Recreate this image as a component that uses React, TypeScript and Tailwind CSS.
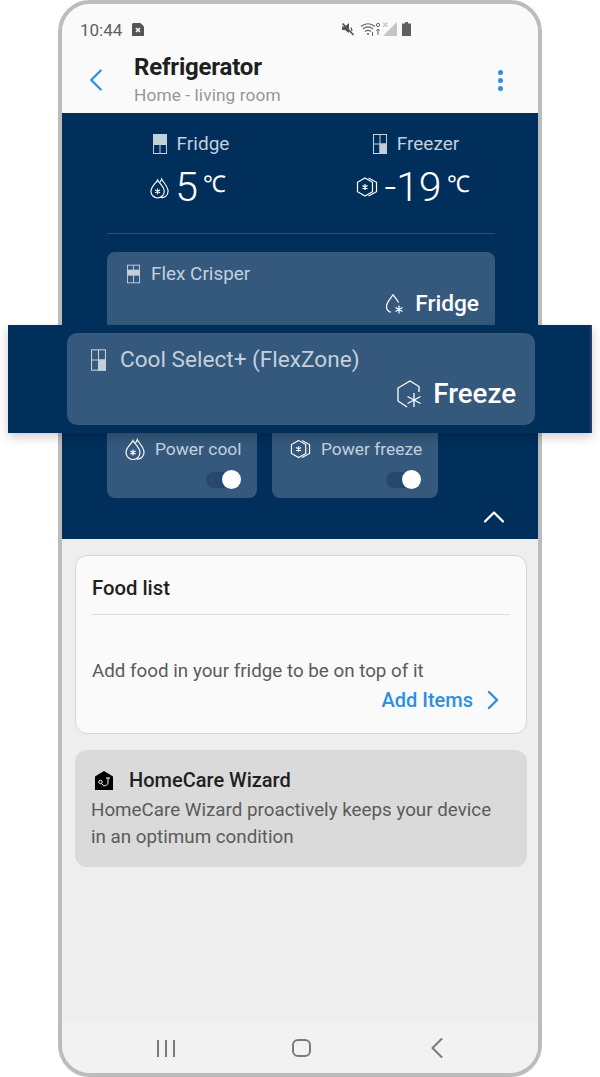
import { ChevronLeft, ChevronRight, ChevronUp } from 'lucide-react';

type DoorProps = { shade: 'top' | 'bottomRight' | 'middle'; className: string };

function DoorIcon({ shade, className }: DoorProps) {
  return (
    <svg viewBox="0 0 14 20" className={className} fill="none" stroke="#c3d0dc" strokeWidth="1">
      {shade === 'top' && <rect x="0.5" y="0.5" width="13" height="10" fill="#c3d0dc" />}
      {shade === 'bottomRight' && <rect x="7" y="10" width="6.5" height="9.5" fill="#c3d0dc" />}
      {shade === 'middle' && <rect x="0.5" y="6" width="13" height="5" fill="#c3d0dc" />}
      <rect x="0.5" y="0.5" width="13" height="19" />
      {shade === 'middle' ? (
        <>
          <path d="M0.5 6H13.5M0.5 11H13.5M7 11V19.5M7 0.5V6" />
        </>
      ) : (
        <path d={shade === 'top' ? 'M0.5 10H13.5M7 10V19.5' : 'M0.5 10H13.5M7 0.5V19.5'} />
      )}
    </svg>
  );
}

function DropsIcon({ className }: { className: string }) {
  return (
    <svg viewBox="0 0 20 22" className={className} fill="none" stroke="white" strokeWidth="1.2">
      <path d="M8 2.500C6.500 6 1 9.500 1 14.500a7 7 0 0 0 14 0C15 9.500 9.500 6 8 2.500Z" />
      <path d="M10.500 5C11.500 3.500 12 2.500 12.300 1.500C14 5.500 19 9 19 14.500a6.500 6.500 0 0 1-7.500 6.500" />
      <path d="M8 11.500v6M5.400 13l5.200 3M10.600 13l-5.200 3" strokeWidth="1.200" />
    </svg>
  );
}

function HexIcon({ className }: { className: string }) {
  return (
    <svg viewBox="0 0 22 20" className={className} fill="none" stroke="white" strokeWidth="1.200">
      <path d="M9 1 16.500 5.300V14.700L9 19 1.500 14.700V5.300Z" />
      <path d="M12.500 1 20.500 5.300V14.700L12.500 19" />
      <path d="M9 7v6M6.400 8.500l5.200 3M11.600 8.500l-5.200 3" strokeWidth="1.200" />
    </svg>
  );
}

function Toggle() {
  return (
    <div className="relative h-4 w-[34px] rounded-full bg-[#26496b]">
      <div className="absolute -right-px -top-[2px] h-[19px] w-[19px] rounded-full bg-white" />
    </div>
  );
}

function StatusBar() {
  return (
    <div className="flex h-[42px] items-end pb-[6px] pl-[18px] text-[#5f5f5f]">
      <span className="text-[17px] leading-5">10:44</span>
      <svg viewBox="0 0 12 13" className="mb-[4px] ml-[10px] h-[13px] w-[12px]">
        <path d="M1 0H8.500L12 3.500V13H0V1Z" fill="#555" />
        <path d="M4 5l4 4M8 5l-4 4" stroke="white" strokeWidth="1.500" />
      </svg>
      <div className="mb-[4px] ml-[197px] flex items-end">
        <svg viewBox="0 0 14 14" className="h-[14px] w-[14px]">
          <path d="M1 4.500H4L8 1V11L4 8H1Z" fill="#555" />
          <path d="M1.500 1.500 12.500 13" stroke="#555" strokeWidth="1.800" />
          <path d="M10 5.500 11 9" stroke="#555" strokeWidth="1.200" />
        </svg>
        <svg viewBox="0 0 22 14" className="ml-[5px] h-[14px] w-[22px]" fill="none" stroke="#666">
          <path d="M1 4.500C5 .8 11 .8 15 4.500M3 7c3-2.500 7-2.500 10 0M5 9.500c2-1.400 4-1.400 6 0" strokeWidth="1.200" />
          <circle cx="8" cy="12" r="1" fill="#666" stroke="none" />
          <path d="M12.500 10v4M18 7v6M16.500 9 18 7l1.500 2" strokeWidth="1" />
          <circle cx="18" cy="3" r="1.600" strokeWidth="1" />
        </svg>
        <svg viewBox="0 0 14 14" className="ml-px h-[14px] w-[14px]">
          <path d="M14 0V14H0Z" fill="#c4c4c4" />
          <path d="M0 .5 4.500 5M4.500 .5 0 5" stroke="#c4c4c4" strokeWidth="1.200" />
        </svg>
        <svg viewBox="0 0 9 14" className="ml-[5px] h-[14px] w-[9px]">
          <path d="M3 0H6V1.500H9V14H0V1.500H3Z" fill="#606060" />
        </svg>
      </div>
    </div>
  );
}

function Header() {
  return (
    <div className="flex h-[67px] items-start bg-[#fafafa]">
      <ChevronLeft className="ml-[15px] mt-[15px] h-[38px] w-[38px] shrink-0 text-[#2c8fe0]" strokeWidth={1.4} />
      <div className="ml-[19px] mt-[7px] flex flex-col">
        <span className="text-[24px] font-bold leading-[28px] tracking-[-0.2px] text-[#1f1f1f]">Refrigerator</span>
        <span className="mt-[2px] text-[17.300px] leading-[24px] tracking-[0.1px] text-[#979797]">Home - living room</span>
      </div>
      <div className="ml-auto mr-[35px] mt-[24px] flex flex-col gap-[3px]">
        <div className="h-[5px] w-[5px] rounded-full bg-[#2c8fe0]" />
        <div className="h-[5px] w-[5px] rounded-full bg-[#2c8fe0]" />
        <div className="h-[5px] w-[5px] rounded-full bg-[#2c8fe0]" />
      </div>
    </div>
  );
}

function TempColumn({ label, shade, temp, width, icon }: { label: string; shade: 'top' | 'bottomRight'; temp: string; width: string; icon: React.ReactNode }) {
  return (
    <div className={`flex shrink-0 flex-col items-center ${width}`}>
      <div className="flex items-center gap-[10px]">
        <DoorIcon shade={shade} className="h-[20px] w-[14px]" />
        <span className="text-[19px] leading-[24px] text-[#c3d0dc]">{label}</span>
      </div>
      <div className="mr-[6px] mt-[6px] flex items-start text-white">
        <div className="mr-[6px] mt-[15px]">{icon}</div>
        <span className="text-[41px] font-light leading-[50px]">{temp}</span>
        <span className="ml-[5px] mt-[8px] text-[23px] font-light leading-[30px]">℃</span>
      </div>
    </div>
  );
}

function FreshPanel() {
  return (
    <div className="h-[426px] bg-[#002f5c] pt-[19px]">
      <div className="flex pl-[38px]">
        <TempColumn label="Fridge" shade="top" temp="5" width="w-[182px]" icon={<DropsIcon className="h-[22px] w-[19px]" />} />
        <TempColumn label="Freezer" shade="bottomRight" temp="-19" width="w-[268px]" icon={<HexIcon className="h-[20px] w-[22px]" />} />
      </div>
      <div className="ml-[45px] mr-[43px] mt-[21px] h-px bg-[#28507a]" />
      <div className="ml-[45px] mr-[43px] mt-[18px] h-[90px] rounded-[8px] bg-[#34597c] pl-[20px] pr-[16px] pt-[10px]">
        <div className="flex items-center gap-[11px]">
          <DoorIcon shade="middle" className="h-[20px] w-[13px]" />
          <span className="text-[18.900px] leading-[24px] text-[#c3d0dc]">Flex Crisper</span>
        </div>
        <div className="mt-[4px] flex items-center justify-end gap-[10px]">
          <svg viewBox="0 0 20 22" className="h-[23px] w-[20px]" fill="none" stroke="white" strokeWidth="1.200">
            <path d="M8 1C6 5 1.500 8.500 1.500 13c0 3 2 5 4.500 5.800" />
            <path d="M8 1c1.500 2.800 4 5 5.500 8" />
            <path d="M14 12v8M10.500 14l7 4M17.500 14l-7 4" />
          </svg>
          <span className="text-[22.700px] font-medium leading-[28px] text-white">Fridge</span>
        </div>
      </div>
      <div className="ml-[45px] mt-[78px] flex gap-[15px]">
        <PowerCard label="Power cool" width="w-[150px]" icon={<DropsIcon className="h-[22px] w-[20px]" />} toggleRight="pr-[17px]" />
        <PowerCard label="Power freeze" width="w-[166px]" icon={<HexIcon className="h-[20px] w-[21px]" />} toggleRight="pr-[18px]" />
      </div>
      <div className="mr-[26px] mt-px flex justify-end">
        <ChevronUp className="h-[36px] w-[36px] text-white" strokeWidth={1.500} />
      </div>
    </div>
  );
}

function PowerCard({ label, width, icon, toggleRight }: { label: string; width: string; icon: React.ReactNode; toggleRight: string }) {
  return (
    <div className={`flex h-[78px] flex-col rounded-[8px] bg-[#34597c] ${width}`}>
      <div className="mt-[17px] flex items-center gap-[10px] pl-[18px]">
        {icon}
        <span className="whitespace-nowrap text-[17.400px] leading-[24px] text-[#c3d0dc]">{label}</span>
      </div>
      <div className={`mt-[11px] flex justify-end ${toggleRight}`}>
        <Toggle />
      </div>
    </div>
  );
}

function FoodCard() {
  return (
    <div className="ml-[13px] mr-[11px] mt-[16px] h-[179px] rounded-[12px] border border-[#d6d6d6] bg-[#fafafa] px-[16px] pt-[19px]">
      <div className="border-b border-[#dcdcdc] pb-[13px] text-[20.300px] font-medium leading-[26px] text-[#1f1f1f]">Food list</div>
      <p className="mt-[44px] text-[18.800px] leading-[24px] text-[#5a5a5a]">Add food in your fridge to be on top of it</p>
      <div className="mt-[4px] flex items-center justify-end text-[#2c8fe0]">
        <span className="text-[20px] font-medium leading-[26px]">Add Items</span>
        <ChevronRight className="-my-[4px] ml-[4px] mr-px h-[32px] w-[32px]" strokeWidth={1.800} />
      </div>
    </div>
  );
}

function WizardCard() {
  return (
    <div className="ml-[13px] mr-[11px] mt-[16px] h-[117px] rounded-[12px] bg-[#dadada] pl-[16px] pr-[16px] pt-[18px]">
      <div className="flex items-center gap-[16px] pl-[4px]">
        <svg viewBox="0 0 18 19" className="h-[19px] w-[18px]">
          <path d="M9 0 18 5.500V19H0V5.500Z" fill="black" />
          <circle cx="5.500" cy="11" r="1.700" fill="none" stroke="white" strokeWidth="1" />
          <path d="M7 13c2 3 6 2 6-2V7M11 7h4" fill="none" stroke="white" strokeWidth="1" />
        </svg>
        <span className="text-[20px] font-medium leading-[24px] text-[#1f1f1f]">HomeCare Wizard</span>
      </div>
      <p className="mt-[5px] text-[18.800px] leading-[27px] text-[#5a5a5a]">
        HomeCare Wizard proactively keeps your device
        <br />
        in an optimum condition
      </p>
    </div>
  );
}

function NavBar() {
  return (
    <div className="flex h-[52px] items-center bg-[#f2f2f2] pt-[2px]">
      <div className="ml-[95px] flex gap-[6px]">
        <div className="h-[17px] w-[2px] bg-[#7a7a7a]" />
        <div className="h-[17px] w-[2px] bg-[#7a7a7a]" />
        <div className="h-[17px] w-[2px] bg-[#7a7a7a]" />
      </div>
      <div className="ml-[117px] h-[18px] w-[19px] rounded-[6px] border-2 border-[#7a7a7a]" />
      <ChevronLeft className="ml-[108px] h-[36px] w-[36px] text-[#7a7a7a]" strokeWidth={1.400} />
    </div>
  );
}

export default function App() {
  return (
    <div className="relative h-[1077px] w-[600px] overflow-hidden bg-white" style={{ fontFamily: 'Roboto, sans-serif' }}>
      <div className="ml-[58px] flex h-[1077px] w-[484px] flex-col overflow-hidden rounded-[32px] border-4 border-[#bcbcbc] bg-[#eeeeee]">
        <div className="bg-[#fafafa]">
          <StatusBar />
          <Header />
        </div>
        <FreshPanel />
        <FoodCard />
        <WizardCard />
        <div className="flex-1" />
        <NavBar />
      </div>
      <div className="absolute left-[8px] top-[325px] h-[108px] w-[584px] border-r-2 border-[#2a3f63] bg-[#002f5c] pl-[59px] pt-[8px] shadow-[0_4px_10px_rgba(0,0,0,0.2)]">
        <div className="h-[92px] w-[468px] rounded-[10px] bg-[#34597c] pl-[24px] pr-[19px] pt-[13px]">
          <div className="flex items-center gap-[14px]">
            <DoorIcon shade="bottomRight" className="h-[24px] w-[15px]" />
            <span className="text-[22.600px] leading-[28px] text-[#c3d0dc]">Cool Select+ (FlexZone)</span>
          </div>
          <div className="mt-[3px] flex items-center justify-end gap-[9px]">
            <svg viewBox="0 0 26 28" className="h-[28px] w-[28px]" fill="none" stroke="white" strokeWidth="1.300">
              <path d="M10 27 1 21V8L13 1l9 5.500V12" />
              <path d="M17 13v14M10.500 16.500l13 7M23.500 16.500l-13 7" />
            </svg>
            <span className="text-[27.700px] font-medium leading-[34px] text-white">Freeze</span>
          </div>
        </div>
      </div>
    </div>
  );
}
